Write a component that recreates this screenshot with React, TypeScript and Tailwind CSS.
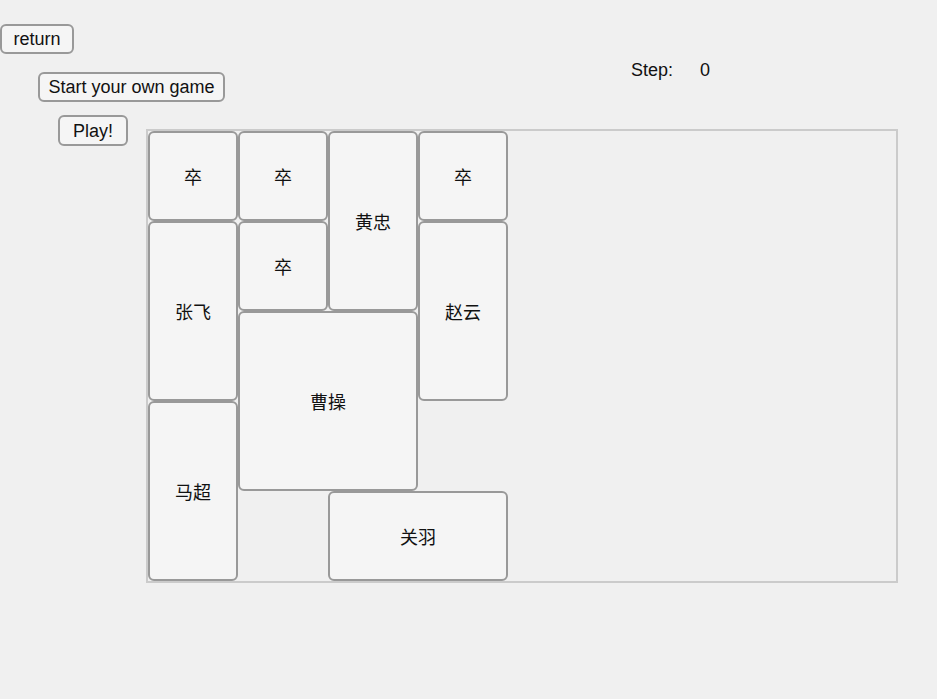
import React from 'react';

const CELL = 90;

const PIECES = [
  { name: '卒', x: 0, y: 0, w: 1, h: 1 },
  { name: '卒', x: 1, y: 0, w: 1, h: 1 },
  { name: '黄忠', x: 2, y: 0, w: 1, h: 2 },
  { name: '卒', x: 3, y: 0, w: 1, h: 1 },
  { name: '张飞', x: 0, y: 1, w: 1, h: 2 },
  { name: '卒', x: 1, y: 1, w: 1, h: 1 },
  { name: '赵云', x: 3, y: 1, w: 1, h: 2 },
  { name: '曹操', x: 1, y: 2, w: 2, h: 2 },
  { name: '马超', x: 0, y: 3, w: 1, h: 2 },
  { name: '关羽', x: 2, y: 4, w: 2, h: 1 },
];

const btn =
  'flex items-center justify-center h-[30px] bg-[#f5f5f5] border-2 border-[#999] rounded-[6px] text-[18px] text-[#111] leading-none';

export default function App() {
  return (
    <div
      className="min-h-screen bg-[#f0f0f0] pt-[24px] text-[#111]"
      style={{ fontFamily: '"Liberation Sans", Arial, "Noto Sans CJK SC", sans-serif' }}
    >
      <button className={`${btn} w-[74px]`}>return</button>

      <div className="flex items-start mt-[18px]">
        <button className={`${btn} ml-[38px] w-[187px]`}>Start your own game</button>
        <div className="ml-[406px] -mt-[12px] flex text-[18px] leading-[21px]">
          <span>Step:</span>
          <span className="ml-[27px]">0</span>
        </div>
      </div>

      <button className={`${btn} ml-[58px] mt-[13px] w-[70px] h-[31px]`}>Play!</button>

      {/* board */}
      <div className="relative ml-[146px] -mt-[17px] w-[752px] h-[454px] border-2 border-[#cbcbcb]">
        {PIECES.map((p, i) => (
          <div
            key={i}
            className="absolute flex items-center justify-center bg-[#f5f5f5] border-2 border-[#999] rounded-[6px] text-[18px]"
            style={{
              left: p.x * CELL,
              top: p.y * CELL,
              width: p.w * CELL,
              height: p.h * CELL,
              fontFamily: '"Noto Sans CJK SC", sans-serif',
            }}
          >
            {p.name}
          </div>
        ))}
      </div>
    </div>
  );
}
